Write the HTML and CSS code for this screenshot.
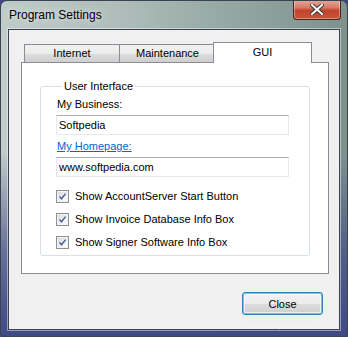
FILE: index.html
```html
<!DOCTYPE html>
<html lang="en">
<head>
    <meta charset="UTF-8">
    <title>Program Settings</title>
    <link rel="stylesheet" href="styles.css">
</head>
<body>
<div class="window">
    <!-- Title bar -->
    <div class="titlebar">
        <span class="title">Program Settings</span>
        <div class="close-x">
            <svg width="14" height="11" viewBox="0 0 14 11">
                <path d="M2 1 L12 10 M12 1 L2 10" stroke="#3a3a3a" stroke-width="4" stroke-linecap="square"/>
                <path d="M2 1 L12 10 M12 1 L2 10" stroke="#ffffff" stroke-width="2" stroke-linecap="square"/>
            </svg>
        </div>
    </div>

    <!-- Client area -->
    <div class="client">
        <div class="tabs">
            <div class="tab">Internet</div>
            <div class="tab tab-2">Maintenance</div>
            <div class="tab active">GUI</div>
        </div>
        <div class="panel">
            <fieldset class="group">
                <legend>User Interface</legend>
                <div class="field-label">My Business:</div>
                <div class="textbox">Softpedia</div>
                <div class="field-label link">My Homepage:</div>
                <div class="textbox">www.softpedia.com</div>
                <div class="checks">
                    <div class="check-row"><span class="check"><svg width="9" height="9" viewBox="0 0 9 9"><path d="M1.5 4.5 L3.5 6.8 L7.6 1.6" fill="none" stroke="#4a6499" stroke-width="1.5"/></svg></span>Show AccountServer Start Button</div>
                    <div class="check-row"><span class="check"><svg width="9" height="9" viewBox="0 0 9 9"><path d="M1.5 4.5 L3.5 6.8 L7.6 1.6" fill="none" stroke="#4a6499" stroke-width="1.5"/></svg></span>Show Invoice Database Info Box</div>
                    <div class="check-row"><span class="check"><svg width="9" height="9" viewBox="0 0 9 9"><path d="M1.5 4.5 L3.5 6.8 L7.6 1.6" fill="none" stroke="#4a6499" stroke-width="1.5"/></svg></span>Show Signer Software Info Box</div>
                </div>
            </fieldset>
        </div>
        <div class="footer">
            <button class="btn">Close</button>
        </div>
    </div>

    <!-- watermark overlay -->
    <div class="wm-url">www.softpedia.com</div>
</div>
</body>
</html>
```

FILE: styles.css
```css
/* General */
* {
    margin: 0;
    padding: 0;
    box-sizing: border-box;
}

body {
    width: 348px;
    height: 337px;
    font-family: 'Liberation Sans', Arial, sans-serif;
    font-size: 11px;
    color: #000;
    background: #3f4985;
    overflow: hidden;
}

/* Aero frame */
.window {
    position: relative;
    width: 348px;
    height: 337px;
    padding: 0 7px 7px 7px;
    border: 1px solid #3a4450;
    border-radius: 7px 7px 4px 4px;
    overflow: hidden;
    background:
        linear-gradient(180deg, rgba(63, 73, 133, 0) 0, rgba(63, 73, 133, 0) 45%, rgba(63, 73, 133, 0.7) 75%, #3f4985 100%),
        linear-gradient(90deg, #c0ccc9 0, #aebdb9 35%, #95a8a3 65%, #7f918d 100%);
}

.titlebar {
    display: flex;
    align-items: flex-start;
    height: 28px;
}

.title {
    margin: 7px 0 0 1px;
    font-size: 12px;
    line-height: 15px;
    color: #000;
    text-shadow: 0 0 6px rgba(255, 255, 255, 0.9);
}

.close-x {
    margin: -1px -1px 0 auto;
    width: 48px;
    height: 20px;
    display: flex;
    align-items: center;
    justify-content: center;
    border: 1px solid #4b2520;
    border-top: none;
    border-radius: 0 0 4px 4px;
    background: linear-gradient(180deg, #e4aa9b 0, #d67a66 40%, #c2432c 55%, #c9553a 100%);
    box-shadow: inset 0 0 0 1px rgba(255, 255, 255, 0.35);
}

/* Client area */
.client {
    height: 301px;
    padding: 12px 15px 0 12px;
    background: #f0f0f0;
    border: 1px solid #3b4350;
    box-shadow: 0 0 0 1px rgba(255, 255, 255, 0.45);
}

/* Tabs */
.tabs {
    display: flex;
    align-items: flex-end;
    padding-left: 3px;
}

.tab {
    width: 96px;
    height: 18px;
    line-height: 16px;
    text-align: center;
    border: 1px solid #898c95;
    border-bottom: none;
    background: linear-gradient(180deg, #f2f2f2 0, #ebebeb 50%, #dddddd 51%, #cfcfcf 100%);
}

.tab-2 {
    margin-left: -1px;
    width: 97px;
}

.tab.active {
    position: relative;
    z-index: 1;
    margin-left: -3px;
    margin-bottom: -1px;
    width: 99px;
    height: 21px;
    padding-top: 1px;
    background: #fff;
}

.panel {
    width: 308px;
    height: 212px;
    background: #fff;
    border: 1px solid #898c95;
}

/* Group box */
.group {
    margin: 17px 0 0 18px;
    width: 270px;
    padding: 0 0 6px 16px;
    border: 1px solid #d5dfe5;
    border-radius: 3px;
}

.group legend {
    margin-left: 5px;
    padding: 0 2px;
    line-height: 13px;
}

.field-label {
    line-height: 13px;
    margin-top: 5px;
}

.link {
    color: #0066cc;
    text-decoration: underline;
}

.textbox {
    width: 233px;
    height: 20px;
    margin: 4px 0 0 -1px;
    padding: 0 2px;
    line-height: 18px;
    border: 1px solid #e3e9ef;
    border-top-color: #abadb3;
    background: #fff;
}

.checks {
    display: flex;
    flex-direction: column;
    gap: 10px;
    margin-top: 13px;
}

.check-row {
    display: flex;
    align-items: center;
    gap: 6px;
    height: 13px;
    line-height: 13px;
    margin-left: -1px;
}

.check {
    width: 13px;
    height: 13px;
    display: flex;
    align-items: center;
    justify-content: center;
    border: 1px solid #8e8f8f;
    background: linear-gradient(135deg, #d4d6da 0, #f1f2f4 60%, #fbfbfb 100%);
    box-shadow: inset 0 0 0 1px #f4f4f4;
}

/* Footer */
.footer {
    display: flex;
    justify-content: flex-end;
    margin-top: 18px;
    margin-right: 1px;
}

.btn {
    width: 81px;
    height: 23px;
    font-family: inherit;
    font-size: 11px;
    color: #000;
    border: 1px solid #3c7fb1;
    border-radius: 3px;
    background: linear-gradient(180deg, #f2f2f2 0, #ebebeb 50%, #dddddd 51%, #cfcfcf 100%);
    box-shadow: inset 0 0 0 1px #48d3fb, inset 0 0 0 2px rgba(255, 255, 255, 0.6);
}

/* Watermark */
.wm-url {
    position: absolute;
    left: 245px;
    top: 321px;
    font-size: 8px;
    line-height: 8px;
    white-space: nowrap;
    color: rgba(255, 255, 255, 0.35);
}
```
